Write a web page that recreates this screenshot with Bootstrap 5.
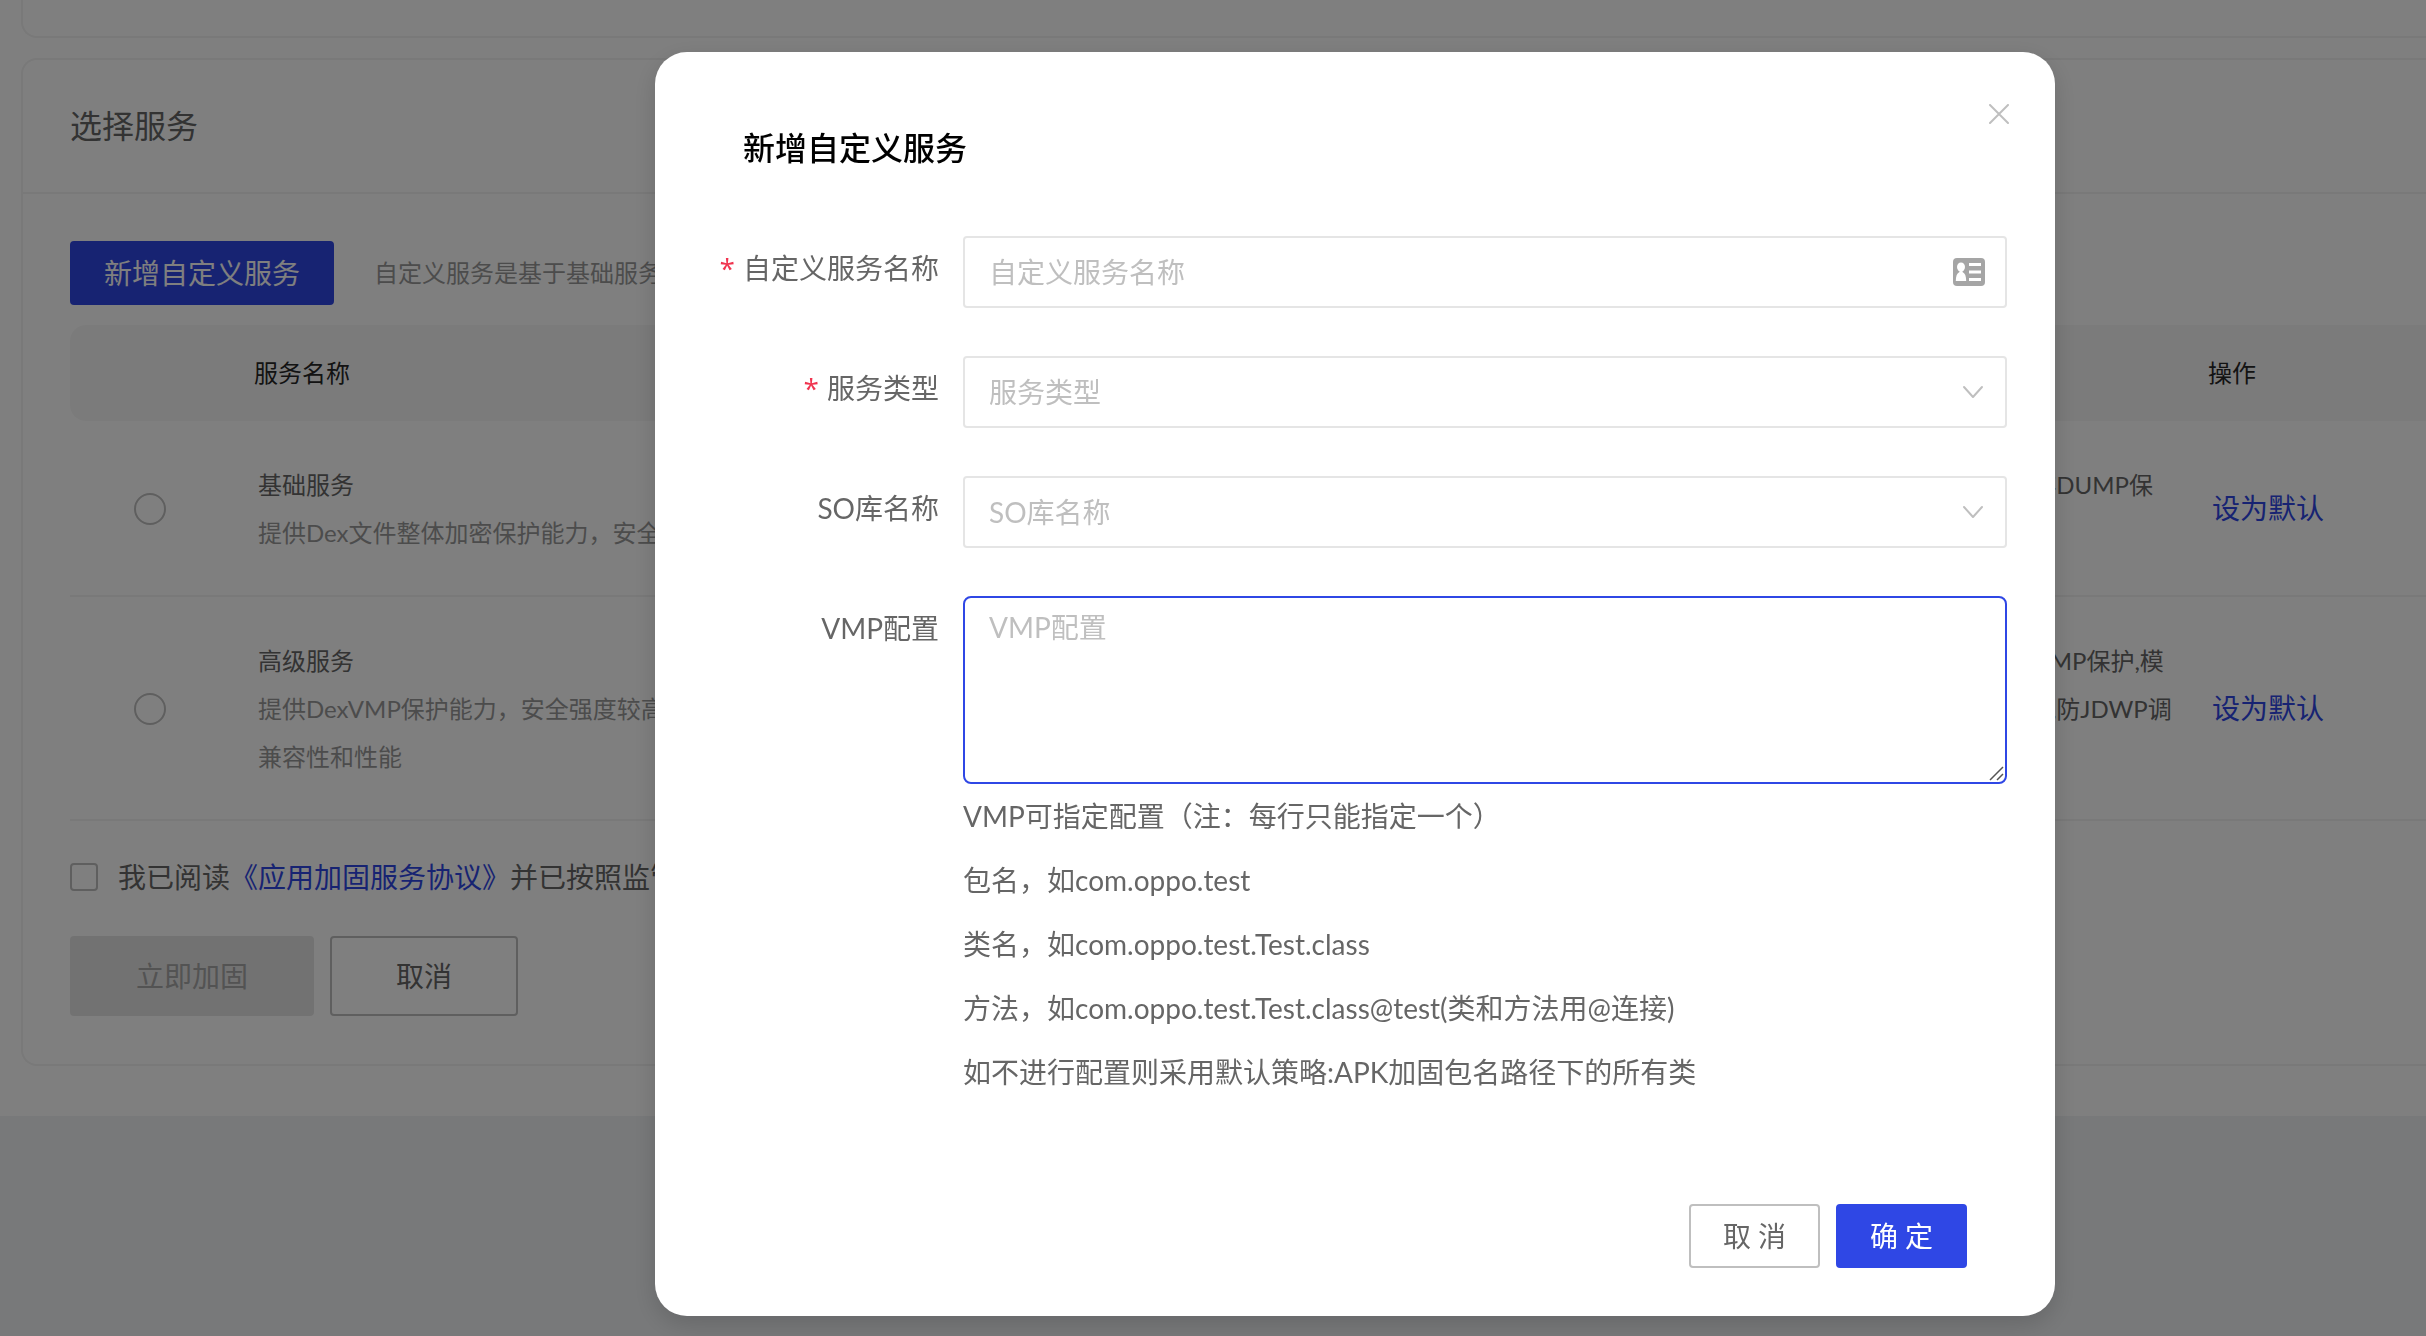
<!DOCTYPE html>
<html lang="zh-CN">
<head>
<meta charset="utf-8">
<meta name="viewport" content="width=device-width, initial-scale=1">
<title>新增自定义服务</title>
<link href="https://cdn.jsdelivr.net/npm/bootstrap@5.3.0/dist/css/bootstrap.min.css" rel="stylesheet">
<style>
:root { --brand: #2f47e5; --line: #f2f2f2; --edge: #bfbfbf; }
body { font-family: Lato, "Noto Sans CJK SC", sans-serif; font-size: 28px; line-height: 48px; color: #666; background: #f0f2f5; overflow: hidden; }
a { color: var(--brand); text-decoration: none; }
.page-sheet { background: #fff; padding: 0 0 50px 21px; box-shadow: 0 8px 32px rgba(110, 150, 215, .32); }
.panel-box { border: 2px solid var(--line); border-right: 0; border-radius: 16px 0 0 16px; }
.panel-prev { height: 38px; border-top: 0; border-top-left-radius: 0; margin-bottom: 20px; }
.panel-head { font-size: 32px; padding: 42px 47px; border-bottom: 2px solid var(--line); }
.panel-main { padding: 47px 0 48px 47px; }
.btn { --bs-btn-border-radius: 4px; --bs-btn-border-width: 2px; --bs-btn-font-size: 28px; --bs-btn-line-height: 42px; --bs-btn-padding-y: 9px; --bs-btn-padding-x: 32px; }
.btn-brand { --bs-btn-bg: var(--brand); --bs-btn-border-color: var(--brand); --bs-btn-color: #fff; --bs-btn-hover-bg: #4a5feb; --bs-btn-hover-color: #fff; }
.btn-line { --bs-btn-color: #666; --bs-btn-border-color: var(--edge); --bs-btn-bg: #fff; --bs-btn-hover-color: var(--brand); --bs-btn-hover-border-color: var(--brand); }
.btn-tall { --bs-btn-padding-y: 17px; --bs-btn-padding-x: 64px; }
.btn-off { --bs-btn-disabled-bg: #e5e5e5; --bs-btn-disabled-border-color: #e5e5e5; --bs-btn-disabled-color: #a6a6a6; --bs-btn-disabled-opacity: 1; }
.hint-text { font-size: 24px; color: #999; margin-left: 40px; }
.svc-table { table-layout: fixed; width: 100%; margin-top: 20px; font-size: 24px; white-space: nowrap; border-collapse: separate; border-spacing: 0; }
.svc-table th { background: #f7f7f7; font-weight: 400; color: #262626; padding: 24px 20px; }
.svc-table th:first-child { border-radius: 16px 0 0 16px; }
.svc-table td { padding: 40px 24px 38px; border-bottom: 2px solid var(--line); overflow: hidden; }
.col-pick { width: 164px; } .col-func { width: 460px; } .col-act { width: 238px; }
.desc-text { color: #999; }
.form-check-input { border: 2px solid var(--edge); margin: 0; }
.pick-radio { width: 32px; height: 32px; display: block; margin-left: 40px; }
.pick-check { width: 28px; height: 28px; }
.form-check-input[type=checkbox] { border-radius: 4px; }
.act-link { font-size: 28px; }
.agree-row { margin-top: 32px; }
.submit-row { margin-top: 35px; }
.dlg-wrap { max-width: 1400px; margin: 52px 0 0 27%; }
.modal-content { border: 0; border-radius: 32px; box-shadow: 0 8px 24px rgba(0, 0, 0, .15); color: #666; }
.dlg-head { padding: 72px 88px 64px; }
.dlg-title { font-size: 32px; line-height: 48px; font-weight: 500; color: #000; }
.dlg-close { position: absolute; top: 44px; right: 38px; width: 36px; height: 36px; }
.dlg-form { padding: 0 48px; gap: 48px; }
.dlg-label { width: 260px; text-align: right; padding-right: 24px; line-height: 64px; }
.req-mark { color: #f0344f; margin-right: 8px; font-family: "Open Sans", sans-serif; }
.dlg-field { color: #666; font-size: 28px; line-height: 42px; border: 2px solid #e5e5e5; border-radius: 4px; height: 72px; padding: 0 24px; background-image: none; }
.dlg-field::placeholder, select.dlg-field { color: #bfbfbf; }
textarea.dlg-field { height: 188px; padding-top: 8px; border-color: var(--brand); border-radius: 8px; resize: none; display: block; }
.field-icon { position: absolute; top: 50%; right: 22px; transform: translateY(-50%); pointer-events: none; }
.grip-icon { position: absolute; right: 3px; bottom: 3px; pointer-events: none; }
.help-lines { line-height: 64px; }
.dlg-foot { padding: 100px 88px 48px; }
.dlg-foot .btn { min-width: 131px; --bs-btn-padding-x: 16px; }
</style>
</head>
<body>
<main class="page-sheet">
  <section class="panel-box panel-prev"></section>
  <section class="panel-box">
    <header class="panel-head">选择服务</header>
    <div class="panel-main">
      <div class="d-flex align-items-center">
        <button type="button" class="btn btn-brand">新增自定义服务</button>
        <span class="hint-text text-nowrap">自定义服务是基于基础服务</span>
      </div>
      <table class="svc-table">
        <colgroup><col class="col-pick"><col><col class="col-func"><col class="col-act"></colgroup>
        <thead><tr><th></th><th>服务名称</th><th></th><th>操作</th></tr></thead>
        <tbody>
          <tr>
            <td><input class="form-check-input pick-radio" type="radio" name="svc" aria-label="基础服务"></td>
            <td>基础服务<br><span class="desc-text">提供Dex文件整体加密保护能力，安全</span></td>
            <td class="align-top">完整性校验,加密,防调试,内存DUMP保<br>护</td>
            <td><a class="act-link" href="#">设为默认</a></td>
          </tr>
          <tr>
            <td><input class="form-check-input pick-radio" type="radio" name="svc" aria-label="高级服务"></td>
            <td>高级服务<br><span class="desc-text">提供DexVMP保护能力，安全强度较高<br>兼容性和性能</span></td>
            <td class="align-top">指令抽取,加固,虚拟,加密,DUMP保护,模<br>拟器检测,重打包保护,防调试,防JDWP调<br>试</td>
            <td><a class="act-link" href="#">设为默认</a></td>
          </tr>
        </tbody>
      </table>
      <div class="agree-row d-flex align-items-center text-nowrap">
        <input class="form-check-input pick-check flex-shrink-0" type="checkbox" id="agree">
        <label class="ms-3 ps-1" for="agree">我已阅读<a href="#">《应用加固服务协议》</a>并已按照监管</label>
      </div>
      <div class="submit-row d-flex gap-3">
        <button type="button" class="btn btn-tall btn-off" disabled>立即加固</button>
        <button type="button" class="btn btn-tall btn-line">取消</button>
      </div>
    </div>
  </section>
</main>

<div class="modal-backdrop show"></div>
<div class="modal show d-block overflow-hidden" tabindex="-1" role="dialog" aria-labelledby="dlgTitle">
  <div class="modal-dialog dlg-wrap">
    <div class="modal-content">
      <header class="dlg-head"><h1 class="dlg-title m-0" id="dlgTitle">新增自定义服务</h1></header>
      <button type="button" class="dlg-close btn p-0 border-0 d-flex align-items-center justify-content-center" aria-label="关闭">
        <svg width="20" height="20" viewBox="0 0 20 20" fill="none" stroke="#bfbfbf" stroke-width="2" stroke-linecap="round"><path d="M1 1l18 18M19 1L1 19"/></svg>
      </button>
      <form class="dlg-form d-flex flex-column">
        <div class="d-flex">
          <label class="dlg-label flex-shrink-0" for="fName"><span class="req-mark">*</span>自定义服务名称</label>
          <div class="flex-grow-1 position-relative">
            <input class="form-control dlg-field" id="fName" type="text" placeholder="自定义服务名称">
            <svg class="field-icon" width="32" height="28" viewBox="0 0 32 28"><rect width="32" height="28" rx="4" fill="#a5a5a5"/><g fill="#fff"><ellipse cx="8" cy="9" rx="4" ry="4.5"/><path d="M6.500 12h3v2c2.500 1 3.700 4 3.700 9H2.800c0-5 1.200-8 3.700-9z"/><path d="M16 5h12v3H16zM16 12.500h12v3H16zM16 20h12v3H16z"/></g></svg>
          </div>
        </div>
        <div class="d-flex">
          <label class="dlg-label flex-shrink-0" for="fType"><span class="req-mark">*</span>服务类型</label>
          <div class="flex-grow-1 position-relative">
            <select class="form-select dlg-field" id="fType"><option>服务类型</option></select>
            <svg class="field-icon" width="24" height="14" viewBox="0 0 24 14" fill="none" stroke="#bfbfbf" stroke-width="2" stroke-linecap="round" stroke-linejoin="round"><path d="M3 2l9 10 9-10"/></svg>
          </div>
        </div>
        <div class="d-flex">
          <label class="dlg-label flex-shrink-0" for="fSo">SO库名称</label>
          <div class="flex-grow-1 position-relative">
            <select class="form-select dlg-field" id="fSo"><option>SO库名称</option></select>
            <svg class="field-icon" width="24" height="14" viewBox="0 0 24 14" fill="none" stroke="#bfbfbf" stroke-width="2" stroke-linecap="round" stroke-linejoin="round"><path d="M3 2l9 10 9-10"/></svg>
          </div>
        </div>
        <div class="d-flex">
          <label class="dlg-label flex-shrink-0" for="fVmp">VMP配置</label>
          <div class="flex-grow-1">
            <div class="position-relative">
              <textarea class="form-control dlg-field" id="fVmp" placeholder="VMP配置"></textarea>
              <svg class="grip-icon" width="15" height="15" viewBox="0 0 15 15" stroke="#555" stroke-width="1.500"><path d="M1 14L14 1M8 14l6-6"/></svg>
            </div>
            <div class="help-lines">
              <div>VMP可指定配置（注：每行只能指定一个）</div>
              <div>包名，如com.oppo.test</div>
              <div>类名，如com.oppo.test.Test.class</div>
              <div>方法，如com.oppo.test.Test.class@test(类和方法用@连接)</div>
              <div>如不进行配置则采用默认策略:APK加固包名路径下的所有类</div>
            </div>
          </div>
        </div>
      </form>
      <footer class="dlg-foot d-flex justify-content-end gap-3">
        <button type="button" class="btn btn-line">取 消</button>
        <button type="button" class="btn btn-brand">确 定</button>
      </footer>
    </div>
  </div>
</div>
<script src="https://cdn.jsdelivr.net/npm/bootstrap@5.3.0/dist/js/bootstrap.bundle.min.js"></script>
</body>
</html>
